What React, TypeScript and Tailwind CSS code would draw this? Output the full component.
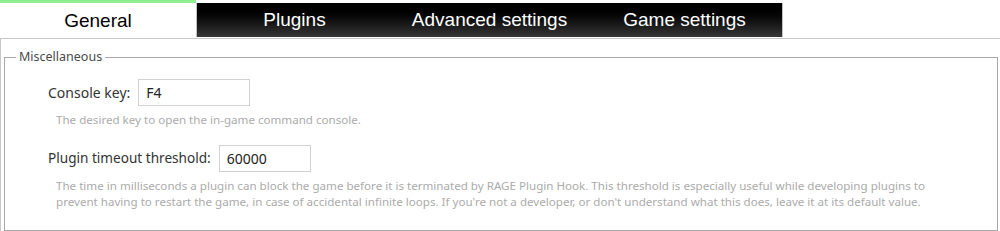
const tabs = ["Plugins", "Advanced settings", "Game settings"];

export default function App() {
  return (
    <div className="w-[1000px] h-[231px] bg-white overflow-hidden flex flex-col font-['Noto_Sans',sans-serif]">
      {/* tab strip */}
      <div className="flex h-[38px] shrink-0">
        <div className="w-[196px] border-t-[3px] border-[#90ee90] flex items-center justify-center pt-[1px] text-[19px] text-black font-['Liberation_Sans',Arial,sans-serif]">
          General
        </div>
        <div className="mt-[3px] h-[34px] flex bg-linear-to-b from-[#000000] to-[#383838] border-l border-r border-[#c0c0c0]">
          {tabs.map((t) => (
            <div
              key={t}
              className="w-[195px] flex items-center justify-center pt-[1px] text-[19px] text-white font-['Liberation_Sans',Arial,sans-serif]"
            >
              {t}
            </div>
          ))}
        </div>
      </div>

      {/* page */}
      <div className="flex-1 border-t border-l border-[#c8c8c8] pl-[3px] pt-[9px]">
        <fieldset className="w-[994px] h-[183px] border border-[#a8a8a8]">
          <legend className="ml-[11px] px-[3px] text-[12.5px] leading-[18px] text-[#4a4a4a]">
            Miscellaneous
          </legend>

          <div className="pl-[43px] pt-[13px]">
            <div className="flex items-center gap-[8px]">
              <span className="text-[14px] text-[#333]">Console key:</span>
              <input
                readOnly
                value="F4"
                className="w-[112px] h-[27px] border border-[#d0d0d0] px-[7px] text-[14px] text-[#222] outline-none"
              />
            </div>
            <p className="ml-[8px] mt-[6px] text-[11.6px] leading-[16px] text-[#ababab]">
              The desired key to open the in-game command console.
            </p>

            <div className="flex items-center gap-[8px] mt-[17px]">
              <span className="text-[13.6px] text-[#333]">Plugin timeout threshold:</span>
              <input
                readOnly
                value="60000"
                className="w-[92px] h-[27px] border border-[#d0d0d0] px-[7px] text-[14px] text-[#222] outline-none"
              />
            </div>
            <p className="ml-[8px] mt-[6px] w-[875px] text-[11.6px] leading-[16px] text-[#ababab]">
              The time in milliseconds a plugin can block the game before it is terminated by RAGE Plugin Hook. This
              threshold is especially useful while developing plugins to prevent having to restart the game, in case
              of accidental infinite loops. If you're not a developer, or don't understand what this does, leave it
              at its default value.
            </p>
          </div>
        </fieldset>
      </div>
    </div>
  );
}
